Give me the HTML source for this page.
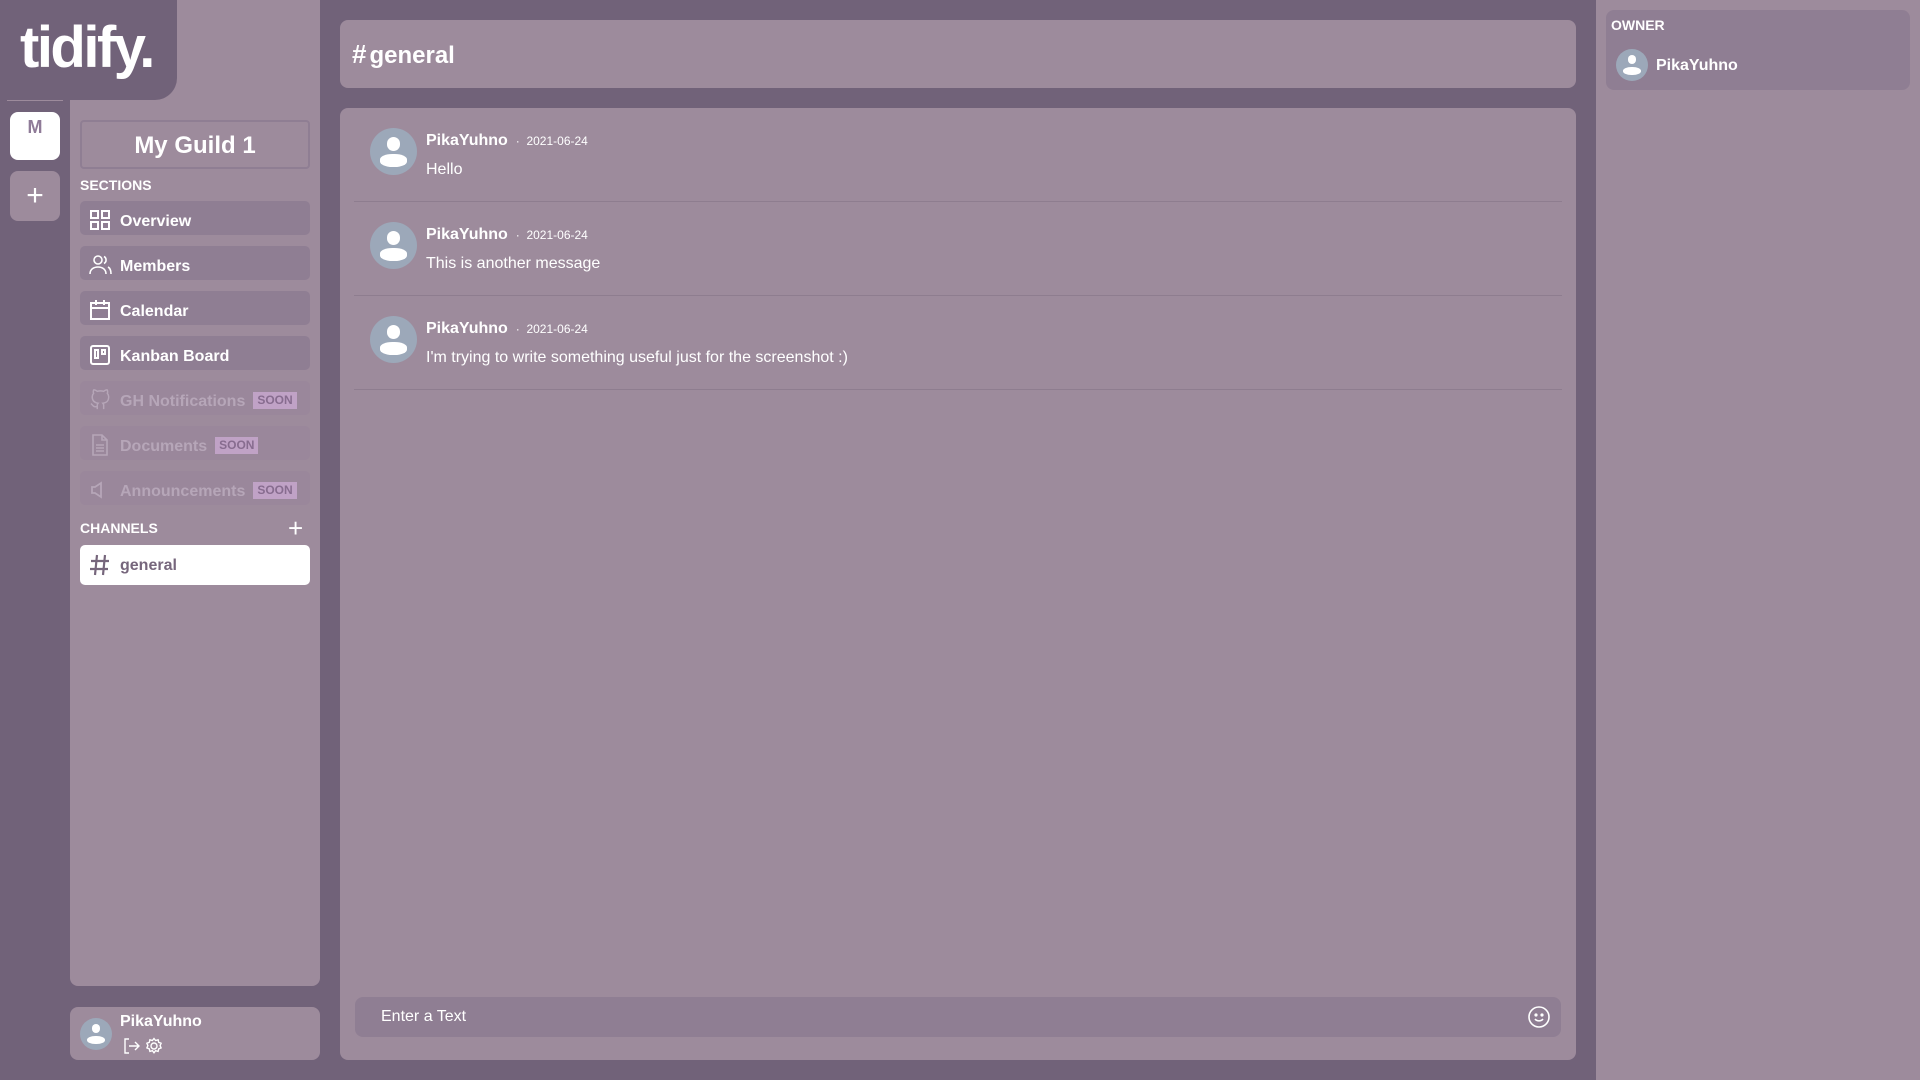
<!DOCTYPE html>
<html><head><meta charset="utf-8"><style>
*{box-sizing:border-box;margin:0;padding:0}
body{width:1920px;height:1080px;background:#716279;font-family:"Liberation Sans",sans-serif;color:#fff;position:relative;overflow:hidden}
.abs{position:absolute}
.panel{background:#9d8b9c}
.logo{left:0;top:0;width:177px;height:100px;background:#716279;border-bottom-right-radius:22px;z-index:2}
.logo span{position:absolute;left:20px;top:14px;font-size:58px;font-weight:bold;letter-spacing:-2.5px}
.item{position:absolute;left:80px;width:230px;height:34px;background:#8f7e93;border-radius:5px;font-size:16px;font-weight:bold;line-height:41px;padding-left:40px}
.item svg{position:absolute;left:9px;top:8px}
.dis{background:#9a879b;color:#b6a6b8}
.soon{display:inline-block;background:#c0a2c6;color:#876c8f;font-size:12px;line-height:17px;padding:0 4px;margin-left:8px;vertical-align:2px}
.lbl{font-size:14px;font-weight:bold}
.av{position:absolute;border-radius:50%;background:#9ca8b9;overflow:hidden}
.av:before{content:"";position:absolute;left:36%;top:20%;width:28%;height:28%;border-radius:50%;background:#fff}
.av:after{content:"";position:absolute;left:21%;top:56%;width:58%;height:26%;border-radius:45%;background:#fff}
.msg .name{font-size:16px;font-weight:bold}
.msg .date{font-size:12px}
.msg .txt{font-size:16px}
.hr{position:absolute;left:354px;width:1208px;height:1px;background:#8e7d8f}
</style></head><body>
<div class="abs logo"><span>tidify.</span></div>
<div class="abs" style="left:7px;top:99px;width:56px;height:2px;background:#9d8b9c"></div>
<div class="abs" style="left:10px;top:112px;width:50px;height:48px;background:#fff;border-radius:8px;color:#8f7b98;font-weight:bold;font-size:18px;text-align:center;padding-top:5px">M</div>
<div class="abs" style="left:10px;top:171px;width:50px;height:50px;background:#9d8b9c;border-radius:8px;text-align:center;font-size:30px;line-height:50px">+</div>

<div class="abs panel" style="left:70px;top:0;width:250px;height:986px;border-radius:0 0 8px 8px"></div>
<div class="abs" style="left:80px;top:120px;width:230px;height:49px;border:2px solid #8f7e93;border-radius:4px;text-align:center;font-size:24px;font-weight:bold;line-height:47px">My Guild 1</div>
<div class="abs lbl" style="left:80px;top:177px">SECTIONS</div>
<div class="item" style="top:201px"><svg width="22" height="22" viewBox="0 0 22 22" fill="none" stroke="#fff" stroke-width="2"><rect x="2" y="2" width="7" height="7"/><rect x="13" y="2" width="7" height="7"/><rect x="2" y="13" width="7" height="7"/><rect x="13" y="13" width="7" height="7"/></svg>Overview</div>
<div class="item" style="top:246px"><svg width="24" height="22" viewBox="0 0 24 22" fill="none" stroke="#fff" stroke-width="1.6"><circle cx="9" cy="6" r="4"/><path d="M1 20c0-5 4-7 8-7s8 2 8 7"/><path d="M15 2.5a4 4 0 0 1 0 7M19 13c2 1 3 3 3 7"/></svg>Members</div>
<div class="item" style="top:291px"><svg width="22" height="22" viewBox="0 0 22 22" fill="none" stroke="#fff" stroke-width="2"><rect x="2" y="4" width="18" height="16"/><path d="M2 9h18M7 1v5M15 1v5"/></svg>Calendar</div>
<div class="item" style="top:336px"><svg width="22" height="22" viewBox="0 0 22 22" fill="none" stroke="#fff" stroke-width="2"><rect x="2" y="2" width="18" height="18" rx="2"/><rect x="6" y="6" width="3" height="8"/><rect x="13" y="6" width="3" height="4"/></svg>Kanban Board</div>
<div class="item dis" style="top:381px"><svg width="22" height="22" viewBox="0 0 24 24" fill="none" stroke="#b6a6b8" stroke-width="1.6"><path d="M9 19c-5 1.5-5-2.5-7-3m14 6v-3.9a3.4 3.4 0 0 0-.9-2.6c3.1-.4 6.4-1.5 6.4-7A5.4 5.4 0 0 0 20 4.8 5 5 0 0 0 19.9 1S18.7.6 16 2.5a13.4 13.4 0 0 0-7 0C6.3.6 5.1 1 5.1 1A5 5 0 0 0 5 4.8a5.4 5.4 0 0 0-1.5 3.7c0 5.4 3.3 6.6 6.4 7A3.4 3.4 0 0 0 9 18.1V22"/></svg>GH Notifications<span class="soon">SOON</span></div>
<div class="item dis" style="top:426px"><svg width="22" height="22" viewBox="0 0 22 22" fill="none" stroke="#b6a6b8" stroke-width="1.6"><path d="M4 1h9l5 5v15H4z"/><path d="M13 1v5h5M7 11h8M7 14h8M7 17h8"/></svg>Documents<span class="soon">SOON</span></div>
<div class="item dis" style="top:471px"><svg width="22" height="22" viewBox="0 0 22 22" fill="none" stroke="#b6a6b8" stroke-width="1.8"><path d="M3 8h3l6-4v14l-6-4H3z"/></svg>Announcements<span class="soon">SOON</span></div>
<div class="abs lbl" style="left:80px;top:520px">CHANNELS</div>
<div class="abs" style="left:288px;top:517px;font-size:26px;line-height:22px">+</div>
<div class="item" style="top:545px;background:#fff;color:#76667c;height:40px;line-height:42px"><svg width="22" height="24" viewBox="0 0 22 24" fill="none" stroke="#76667c" stroke-width="2.2" style="top:8px"><path d="M8 2L6 22M16 2l-2 20M2 8h18M1 16h18"/></svg>general</div>

<div class="abs panel" style="left:70px;top:1007px;width:250px;height:53px;border-radius:8px"></div>
<div class="av" style="left:80px;top:1018px;width:32px;height:32px"></div>
<div class="abs" style="left:120px;top:1013px;font-size:16px;font-weight:bold">PikaYuhno</div>
<svg class="abs" style="left:123px;top:1037px" width="42" height="18" viewBox="0 0 42 18" fill="none" stroke="#fff" stroke-width="1.4"><path d="M6 2H2v14h4M6 9h10M12 5l4 4-4 4"/><circle cx="31" cy="9" r="3"/><path d="M31 1.5l1.6 2 2.5-.7.6 2.5 2.4 1-1 2.3 1 2.3-2.4 1-.6 2.5-2.5-.7-1.6 2-1.6-2-2.5.7-.6-2.5-2.4-1 1-2.3-1-2.3 2.4-1 .6-2.5 2.5.7z"/></svg>

<div class="abs panel" style="left:340px;top:20px;width:1236px;height:68px;border-radius:8px;font-size:24px;font-weight:bold;line-height:68px;padding-left:12px"><span style="font-size:26px;margin-right:3px">#</span>general</div>

<div class="abs panel" style="left:340px;top:108px;width:1236px;height:952px;border-radius:8px"></div>
<div class="msg">
<div class="av" style="left:370px;top:128px;width:47px;height:47px"></div>
<div class="abs" style="left:426px;top:132px"><span class="name">PikaYuhno</span><span class="date" style="margin-left:8px">·&nbsp;&nbsp;2021-06-24</span></div>
<div class="abs txt" style="left:426px;top:161px">Hello</div>
<div class="hr" style="top:201px"></div>
<div class="av" style="left:370px;top:222px;width:47px;height:47px"></div>
<div class="abs" style="left:426px;top:226px"><span class="name">PikaYuhno</span><span class="date" style="margin-left:8px">·&nbsp;&nbsp;2021-06-24</span></div>
<div class="abs txt" style="left:426px;top:255px">This is another message</div>
<div class="hr" style="top:295px"></div>
<div class="av" style="left:370px;top:316px;width:47px;height:47px"></div>
<div class="abs" style="left:426px;top:320px"><span class="name">PikaYuhno</span><span class="date" style="margin-left:8px">·&nbsp;&nbsp;2021-06-24</span></div>
<div class="abs txt" style="left:426px;top:349px">I'm trying to write something useful just for the screenshot :)</div>
<div class="hr" style="top:389px"></div>
</div>

<div class="abs" style="left:355px;top:997px;width:1206px;height:40px;background:#8f7e93;border-radius:8px;font-size:16px;line-height:40px;padding-left:26px">Enter a Text</div>
<svg class="abs" style="left:1527px;top:1005px" width="24" height="24" viewBox="0 0 24 24" fill="none" stroke="#fff" stroke-width="1.6"><circle cx="12" cy="12" r="10"/><path d="M8 14c2 2.5 6 2.5 8 0"/><circle cx="9" cy="10" r=".8" fill="#fff"/><circle cx="15" cy="10" r=".8" fill="#fff"/></svg>

<div class="abs panel" style="left:1596px;top:0;width:324px;height:1080px"></div>
<div class="abs" style="left:1606px;top:10px;width:304px;height:80px;background:#8f7e93;border-radius:8px"></div>
<div class="abs lbl" style="left:1611px;top:17px">OWNER</div>
<div class="av" style="left:1616px;top:49px;width:32px;height:32px"></div>
<div class="abs" style="left:1656px;top:57px;font-size:16px;font-weight:bold">PikaYuhno</div>
</body></html>
